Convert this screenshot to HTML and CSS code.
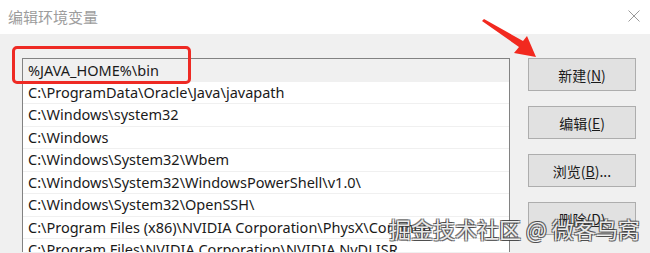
FILE: index.html
```html
<!DOCTYPE html>
<html>
<head>
    <title>编辑环境变量</title>
    <link rel="stylesheet" href="styles.css">
</head>
<body>
    <div class="titlebar">
        <span class="title">编辑环境变量</span>
        <svg class="close" width="12" height="12" viewBox="0 0 12 12">
            <path d="M0.5 0.5 L11.5 11.5 M11.5 0.5 L0.5 11.5" stroke="#9a9a9a" stroke-width="1" fill="none"/>
        </svg>
    </div>

    <div class="content">
        <div class="path-list">
            <div class="row editing">%JAVA_HOME%\bin</div>
            <div class="row">C:\ProgramData\Oracle\Java\javapath</div>
            <div class="row">C:\Windows\system32</div>
            <div class="row">C:\Windows</div>
            <div class="row">C:\Windows\System32\Wbem</div>
            <div class="row">C:\Windows\System32\WindowsPowerShell\v1.0\</div>
            <div class="row">C:\Windows\System32\OpenSSH\</div>
            <div class="row">C:\Program Files (x86)\NVIDIA Corporation\PhysX\Common</div>
            <div class="row">C:\Program Files\NVIDIA Corporation\NVIDIA NvDLISR</div>
        </div>

        <div class="buttons">
            <button>新建(<u>N</u>)</button>
            <button>编辑(<u>E</u>)</button>
            <button>浏览(<u>B</u>)...</button>
            <button>删除(<u>D</u>)</button>
        </div>
    </div>

    <!-- annotations drawn over the screenshot -->
    <div class="mark-box"></div>
    <svg class="arrow" width="650" height="253" viewBox="0 0 650 253">
        <polygon points="482,21 484,19 523,41 527,36 536,57 514,53 519,47" fill="#f2291f"/>
    </svg>
    <div class="watermark">掘金技术社区 @ 微客鸟窝</div>
</body>
</html>
```

FILE: styles.css
```css
body {
    margin: 0;
    width: 650px;
    height: 253px;
    overflow: hidden;
    background-color: #f0f0f0;
    font-family: "Noto Sans", "Noto Sans CJK SC", sans-serif;
    position: relative;
}

.titlebar {
    height: 34px;
    background-color: #ffffff;
    display: flex;
    align-items: center;
    justify-content: space-between;
    padding: 0 10px 0 8px;
}

.title {
    font-family: "Noto Sans CJK SC", sans-serif;
    font-size: 15px;
    color: #9d9d9d;
    margin-top: -2px;
}

.close {
    margin-top: -2px;
}

.content {
    display: flex;
    align-items: flex-start;
    padding: 24px 0 0 22px;
    gap: 18px;
}

.path-list {
    width: 486px;
    height: 193px;
    overflow: hidden;
    border: 1px solid #828282;
    border-bottom: none;
    background-color: #ffffff;
}

.row {
    height: 21.5px;
    line-height: 21.5px;
    border-bottom: 1px solid #f0f0f0;
    padding-left: 5px;
    font-size: 14.5px;
    color: #1a1a1a;
    white-space: nowrap;
    overflow: hidden;
}

.row.editing {
    background-color: #f0f0f0;
    height: 22.5px;
    line-height: 22.5px;
    border-bottom: none;
}

.buttons {
    display: flex;
    flex-direction: column;
    gap: 15px;
}

button {
    width: 108px;
    height: 33px;
    background-color: #e1e1e1;
    border: 1px solid #adadad;
    font-family: "Noto Sans CJK SC", sans-serif;
    font-size: 14px;
    color: #1a1a1a;
    padding: 0;
}

.mark-box {
    position: absolute;
    left: 12px;
    top: 46px;
    width: 173px;
    height: 32px;
    border: 3px solid #ee2a24;
    border-radius: 5px;
}

.arrow {
    position: absolute;
    left: 0;
    top: 0;
}

.watermark {
    position: absolute;
    left: 389px;
    top: 212px;
    font-family: "Noto Sans CJK SC", sans-serif;
    font-size: 22px;
    color: rgba(255, 255, 255, 0.9);
    white-space: nowrap;
    text-shadow: 1px 1px 0 rgba(60, 60, 60, 0.7), -1px -1px 0 rgba(60, 60, 60, 0.7),
                 1px -1px 0 rgba(60, 60, 60, 0.7), -1px 1px 0 rgba(60, 60, 60, 0.7);
}
```
